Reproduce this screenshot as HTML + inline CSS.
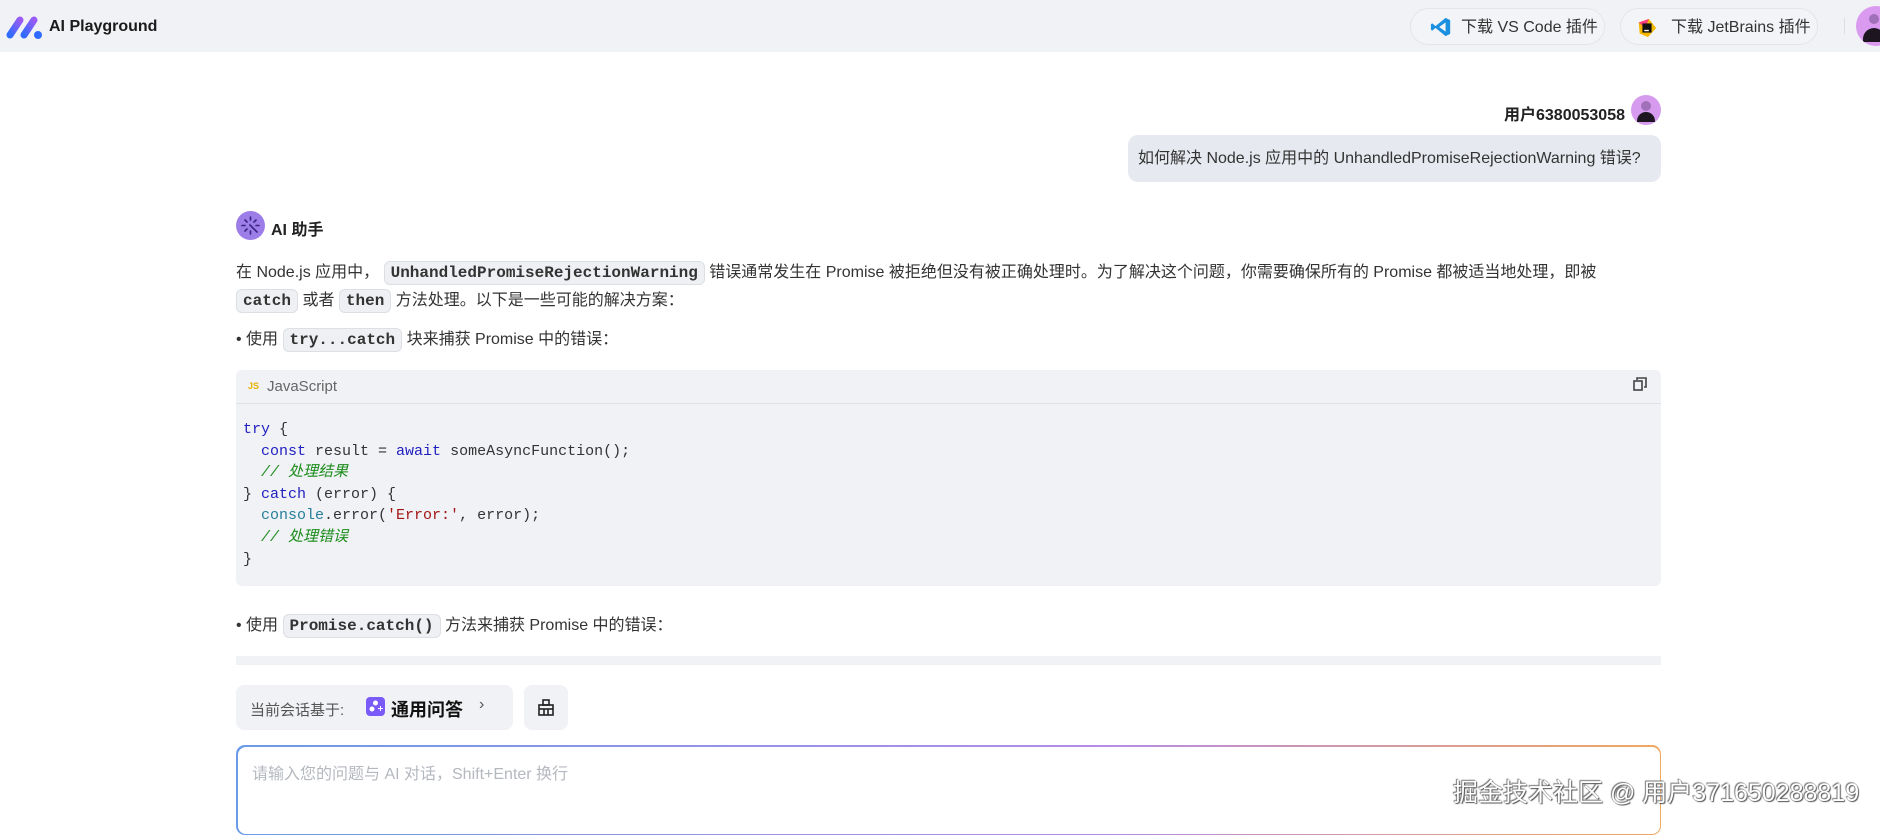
<!DOCTYPE html>
<html><head><meta charset="utf-8">
<style>
*{margin:0;padding:0;box-sizing:border-box}
body{width:1880px;height:823px;overflow:hidden;background:#fff;font-family:"Liberation Sans","Noto Sans CJK SC",sans-serif;color:#1f2329;position:relative}
.hdr{position:absolute;left:0;top:0;width:1880px;height:52px;background:#f1f2f6}
.logo{position:absolute;left:6px;top:15px}
.title{position:absolute;left:49px;top:18px;font-size:16px;font-weight:bold;color:#1a1a1a}
.btn{position:absolute;top:8px;height:37px;border:1px solid #e4e5ea;border-radius:19px;background:#f3f4f7;font-size:16px;color:#333;line-height:37px;padding-left:50px}
.abs{position:absolute}
.code{font-family:"Liberation Mono","Noto Sans CJK SC",monospace}
.ic{font-family:"Liberation Mono",monospace;font-weight:bold;background:#eef0f3;border:1px solid #dcdfe4;border-radius:6px;padding:2px 6px;font-size:16px;color:#333}
.p{position:absolute;left:236px;font-size:16px;color:#333;white-space:nowrap}
.kw{color:#1f1fbf}.cm{color:#1a8c1a;font-style:italic}.st{color:#a31515}.tl{color:#267f99}
</style></head><body>
<div class="hdr">
 <svg class="logo" width="36" height="24" viewBox="0 0 36 24">
  <defs><linearGradient id="g" x1="0" y1="1" x2="1" y2="0"><stop offset="0" stop-color="#2f6bff"/><stop offset="1" stop-color="#9a5cf5"/></linearGradient></defs>
  <line x1="4" y1="20" x2="14" y2="5" stroke="url(#g)" stroke-width="7" stroke-linecap="round"/>
  <line x1="18" y1="20" x2="28" y2="5" stroke="url(#g)" stroke-width="7" stroke-linecap="round"/>
  <circle cx="32" cy="20" r="4" fill="#2f6bff"/>
 </svg>
 <div class="title">AI Playground</div>
 <div class="btn" style="left:1410px;width:195px">
  <svg class="abs" style="left:18px;top:7px" width="24" height="22" viewBox="0 0 24 24"><path d="M17 2 L22 4.5 V19.5 L17 22 L6 13 L2.5 16 L1 15 V9 L2.5 8 L6 11 Z M17 7 L10 12 L17 17 Z" fill="#1b8fe0" fill-rule="evenodd"/></svg>
  下载 VS Code 插件</div>
 <div class="btn" style="left:1620px;width:198px">
  <svg class="abs" style="left:14px;top:8px" width="24" height="22" viewBox="0 0 24 24"><path d="M3 6 L14 2 L22 12 L13 22 L4 18 Z" fill="#f5b800"/><path d="M3 6 L14 2 L10 12 Z" fill="#ff3d7f"/><rect x="7" y="7" width="10" height="10" fill="#111"/><rect x="9" y="14" width="5" height="1.5" fill="#fff"/></svg>
  下载 JetBrains 插件</div>
 <div class="abs" style="left:1844px;top:18px;width:1px;height:16px;background:#ddd"></div>
 <div class="abs" style="left:1856px;top:6px;width:40px;height:40px;border-radius:50%;background:#d99af0;overflow:hidden"><div class="abs" style="left:13px;top:8px;width:10px;height:10px;border-radius:50%;background:#a070b8"></div><div class="abs" style="left:7px;top:22px;width:22px;height:14px;border-radius:11px 11px 0 0;background:#1d1620"></div></div>
</div>

<div class="abs" style="left:1200px;top:101px;width:425px;text-align:right;font-size:16px;font-weight:bold;color:#222">用户6380053058</div>
<div class="abs" style="left:1631px;top:95px;width:30px;height:30px;border-radius:50%;background:#d69bee;overflow:hidden"><div class="abs" style="left:10px;top:6px;width:10px;height:10px;border-radius:50%;background:#a070b8"></div><div class="abs" style="left:6px;top:17px;width:18px;height:10px;border-radius:9px 9px 0 0;background:#1d1620"></div></div>
<div class="abs" style="left:1128px;top:135px;width:533px;height:47px;background:#e6e9ef;border-radius:10px;font-size:16px;color:#333;line-height:47px;padding-left:10px;white-space:nowrap">如何解决 Node.js 应用中的 UnhandledPromiseRejectionWarning 错误?</div>

<div class="abs" style="left:236px;top:211px;width:29px;height:29px;border-radius:50%;background:#9d7ee8">
 <svg width="29" height="29" viewBox="0 0 29 29" stroke="#3a2480" stroke-width="1.6" stroke-linecap="round"><line x1="14.5" y1="6" x2="14.5" y2="9"/><line x1="14.5" y1="20" x2="14.5" y2="23"/><line x1="6" y1="14.5" x2="9" y2="14.5"/><line x1="20" y1="14.5" x2="23" y2="14.5"/><line x1="9" y1="9" x2="11" y2="11"/><line x1="18" y1="11" x2="20" y2="9"/><line x1="9" y1="20" x2="11" y2="18"/><line x1="14" y1="14" x2="21" y2="21"/></svg>
</div>
<div class="abs" style="left:271px;top:216px;font-size:16px;font-weight:bold;color:#222">AI 助手</div>

<div class="p" style="top:258px">在 Node.js 应用中， <span class="ic">UnhandledPromiseRejectionWarning</span> 错误通常发生在 Promise 被拒绝但没有被正确处理时。为了解决这个问题，你需要确保所有的 Promise 都被适当地处理，即被</div>
<div class="p" style="top:286px"><span class="ic">catch</span> 或者 <span class="ic">then</span> 方法处理。以下是一些可能的解决方案：</div>
<div class="p" style="top:325px">• 使用 <span class="ic">try...catch</span> 块来捕获 Promise 中的错误：</div>

<div class="abs" style="left:236px;top:370px;width:1425px;height:216px;background:#f1f2f6;border-radius:6px">
 <div class="abs" style="left:12px;top:11px;font-size:9px;font-weight:bold;color:#e8b100">JS</div>
 <div class="abs" style="left:31px;top:8px;font-size:15px;color:#666">JavaScript</div>
 <svg class="abs" style="left:1397px;top:7px" width="14" height="14" viewBox="0 0 14 14" fill="none" stroke="#444" stroke-width="1.6"><rect x="1" y="4" width="8" height="9"/><path d="M4 3 V1 H13 V10 H11"/></svg>
 <div class="abs" style="left:0;top:33px;width:1425px;height:1px;background:#dfe1e6"></div>
 <pre class="code abs" style="left:7px;top:49px;font-size:15px;line-height:21.6px;color:#333">
<span class="kw">try</span> {
  <span class="kw">const</span> result = <span class="kw">await</span> someAsyncFunction();
  <span class="cm">// 处理结果</span>
} <span class="kw">catch</span> (error) {
  <span class="tl">console</span>.error(<span class="st">'Error:'</span>, error);
  <span class="cm">// 处理错误</span>
}</pre>
</div>

<div class="p" style="top:611px">• 使用 <span class="ic">Promise.catch()</span> 方法来捕获 Promise 中的错误：</div>
<div class="abs" style="left:236px;top:656px;width:1425px;height:9px;background:#f1f2f6"></div>

<div class="abs" style="left:236px;top:685px;width:277px;height:45px;background:#f1f2f5;border-radius:8px">
 <div class="abs" style="left:14px;top:14px;font-size:15px;color:#555">当前会话基于:</div>
 <div class="abs" style="left:130px;top:12px;width:19px;height:19px;background:#7a5af8;border-radius:4px"><svg width="19" height="19" viewBox="0 0 19 19" fill="#fff"><circle cx="6" cy="12" r="2.5"/><circle cx="9.5" cy="6" r="2.5"/><path d="M12 11h2v-2h1v2h2v1h-2v2h-1v-2h-2z"/></svg></div>
 <div class="abs" style="left:155px;top:11px;font-size:18px;font-weight:bold;color:#111">通用问答</div>
 <div class="abs" style="left:243px;top:11px;font-size:16px;color:#555">›</div>
</div>
<div class="abs" style="left:524px;top:685px;width:44px;height:45px;background:#f1f2f5;border-radius:8px">
 <svg class="abs" style="left:13px;top:14px" width="18" height="17" viewBox="0 0 18 17" fill="none" stroke="#222" stroke-width="1.6"><rect x="6" y="1" width="6" height="5"/><rect x="2" y="6" width="14" height="10"/><line x1="2" y1="10" x2="16" y2="10"/><line x1="7" y1="10" x2="7" y2="16"/><line x1="11" y1="10" x2="11" y2="16"/></svg>
</div>

<div class="abs" style="left:236px;top:745px;width:1425px;height:90px;border-radius:9px;padding:1.5px;background:linear-gradient(90deg,#6b9be8,#b48ce8 60%,#f0a860)">
 <div style="width:100%;height:100%;background:#fff;border-radius:8px"></div>
</div>
<div class="abs" style="left:252px;top:760px;font-size:16px;color:#b4b8bf">请输入您的问题与 AI 对话，Shift+Enter 换行</div>

<div class="abs" style="left:1453px;top:773px;font-size:25px;color:#fff;white-space:nowrap;text-shadow:1px 1px 1px #555,-1px -1px 1px #777,0 0 1px #444">掘金技术社区 @ 用户371650288819</div>
</body></html>
